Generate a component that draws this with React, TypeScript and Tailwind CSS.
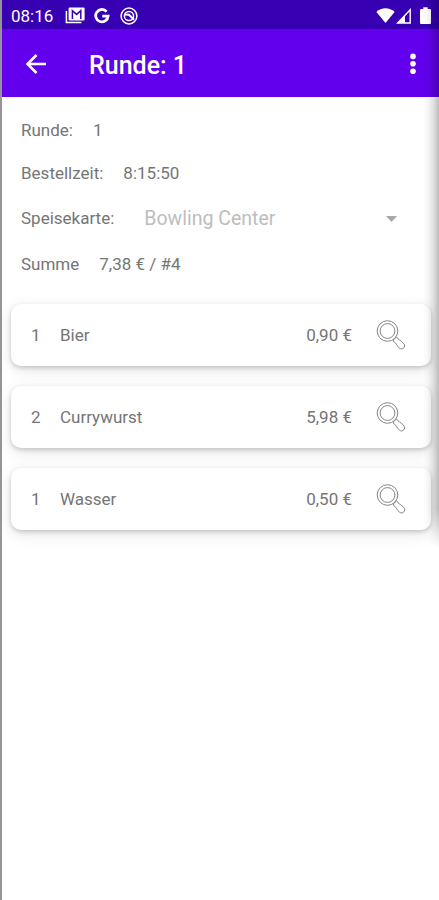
import React from "react";

interface OrderItem {
  id: string;
  count: number;
  name: string;
  price: string;
}

const items: OrderItem[] = [
  { id: "bier", count: 1, name: "Bier", price: "0,90 €" },
  { id: "currywurst", count: 2, name: "Currywurst", price: "5,98 €" },
  { id: "wasser", count: 1, name: "Wasser", price: "0,50 €" },
];

function MagnifierIcon() {
  return (
    <svg className="w-8 h-8 shrink-0" viewBox="0 0 32 32" fill="none" stroke="#858585" strokeWidth="1">
      <circle cx="12.5" cy="12" r="10.3" />
      <circle cx="12.5" cy="12" r="7.4" />
      <path d="M18.6 20.6 L21.6 18 C22.8 20.4 26.2 21.6 28.8 24.6 C31.4 27.6 27.6 31.6 24.4 29.2 C21.6 27 21.4 23.6 18.6 22.6 Z" />
    </svg>
  );
}

function StatusBar() {
  return (
    <div className="h-[29px] flex items-center bg-[#3700b3] pl-[9px] pr-[8px] pt-[2px] text-white">
      <span className="w-[54px] pt-[2px] text-[17px] leading-none">08:16</span>
      <svg className="w-5 h-[17px]" viewBox="0 0 20 17" fill="none">
        <path d="M1.4 4 V15.5 H16.5" stroke="#fff" strokeWidth="1.5" />
        <rect x="3.6" y="0.6" width="16" height="12.8" rx="1" fill="#fff" />
        <path d="M7.4 12 V3.6 L11.6 7.4 L15.8 3.6 V12" stroke="#3700b3" strokeWidth="1.5" />
      </svg>
      <svg className="w-4 h-4 ml-[9px]" viewBox="0 0 16 16" fill="none">
        <path d="M12.6 3.6 A6.2 6.2 0 1 0 14.1 8.2 H8.3" stroke="#fff" strokeWidth="2.8" />
      </svg>
      <svg className="w-[18px] h-[18px] ml-[10px]" viewBox="0 0 18 18" fill="none" stroke="#fff">
        <circle cx="9" cy="9" r="7.9" strokeWidth="1.5" />
        <circle cx="9" cy="9" r="4.6" strokeWidth="1.5" />
        <path d="M5 7.4 L9 7.8 L14 12.8" strokeWidth="2" />
      </svg>
      <svg className="w-[19px] h-[15px] ml-auto" viewBox="0 0 19 15" fill="#fff">
        <path d="M0.4 4 C5.5 -0.9 13.5 -0.9 18.6 4 L9.5 15 Z" />
      </svg>
      <svg className="w-[15px] h-[16px] ml-[1px]" viewBox="0 0 15 16">
        <path d="M1.7 15 L14.2 1.8 V15 Z" stroke="#fff" strokeWidth="1.4" fill="none" />
        <path d="M1.7 15 L9 7.5 V15 Z" fill="#fff" />
      </svg>
      <svg className="w-[11px] h-[17px] ml-[9px]" viewBox="0 0 11 17" fill="#fff">
        <path d="M3.3 0.3 H7.7 V2 H10 Q11 2 11 3 V16 Q11 17 10 17 H1 Q0 17 0 16 V3 Q0 2 1 2 H3.3 Z" />
      </svg>
    </div>
  );
}

function AppBar() {
  return (
    <div className="h-[68px] flex items-center bg-[#6200ee] pl-[23px] pr-[22px] pt-[2px] text-white">
      <svg className="w-[22px] h-[22px]" viewBox="0 0 22 22" fill="none" stroke="#fff" strokeWidth="2.5">
        <path d="M21 11 H3 M11.5 2 L2.5 11 L11.5 20" />
      </svg>
      <h1 className="ml-[42px] pt-[2px] text-[25px] font-medium leading-none">Runde: 1</h1>
      <svg className="w-[8px] h-[22px] ml-auto" viewBox="0 0 8 22" fill="#fff">
        <circle cx="4" cy="3.4" r="2.8" />
        <circle cx="4" cy="10.8" r="2.8" />
        <circle cx="4" cy="18.2" r="2.8" />
      </svg>
    </div>
  );
}

function OrderCard({ item }: { item: OrderItem }) {
  return (
    <div className="h-[62px] flex items-center rounded-[10px] bg-white pl-5 pr-6 shadow-[0_2px_4px_rgba(0,0,0,0.17),0_4px_16px_rgba(0,0,0,0.11)]">
      <span className="w-[29px] pt-[2px]">{item.count}</span>
      <span className="pt-[2px]">{item.name}</span>
      <span className="ml-auto mr-[23px] pt-[2px]">{item.price}</span>
      <MagnifierIcon />
    </div>
  );
}

export default function App() {
  return (
    <div className="relative w-full h-[900px] overflow-hidden border-l-2 border-[#979398] bg-white font-['Roboto',sans-serif] text-[17px] text-[#757575]">
      <StatusBar />
      <AppBar />
      <div className="flex flex-col pl-[19px] pt-[12px] leading-none">
        <div className="h-[43px] flex items-center gap-5">
          <span>Runde:</span>
          <span>1</span>
        </div>
        <div className="h-[42px] flex items-center gap-5">
          <span>Bestellzeit:</span>
          <span>8:15:50</span>
        </div>
        <div className="h-[49px] flex items-center pr-[42px]">
          <span>Speisekarte:</span>
          <span className="ml-[30px] text-[19.5px] text-[#bdbdbd]">Bowling Center</span>
          <svg className="w-[11px] h-[6px] ml-auto" viewBox="0 0 11 6" fill="#a8a8a8">
            <path d="M0 0 H11 L5.5 6 Z" />
          </svg>
        </div>
        <div className="h-[43px] flex items-center gap-5">
          <span>Summe</span>
          <span>7,38 € / #4</span>
        </div>
      </div>
      <div className="mt-[18px] ml-[9px] mr-[8px] flex flex-col gap-[20px]">
        {items.map((item) => (
          <OrderCard key={item.id} item={item} />
        ))}
      </div>
      {/* Shadow of the neighbouring screen along the right edge */}
      <div className="pointer-events-none absolute top-0 right-0 w-4 h-[548px] bg-[linear-gradient(to_left,rgba(0,0,0,0.26),rgba(0,0,0,0.12)_35%,rgba(0,0,0,0.03)_70%,transparent)] [mask-image:linear-gradient(to_bottom,black_93%,transparent)]" />
    </div>
  );
}
